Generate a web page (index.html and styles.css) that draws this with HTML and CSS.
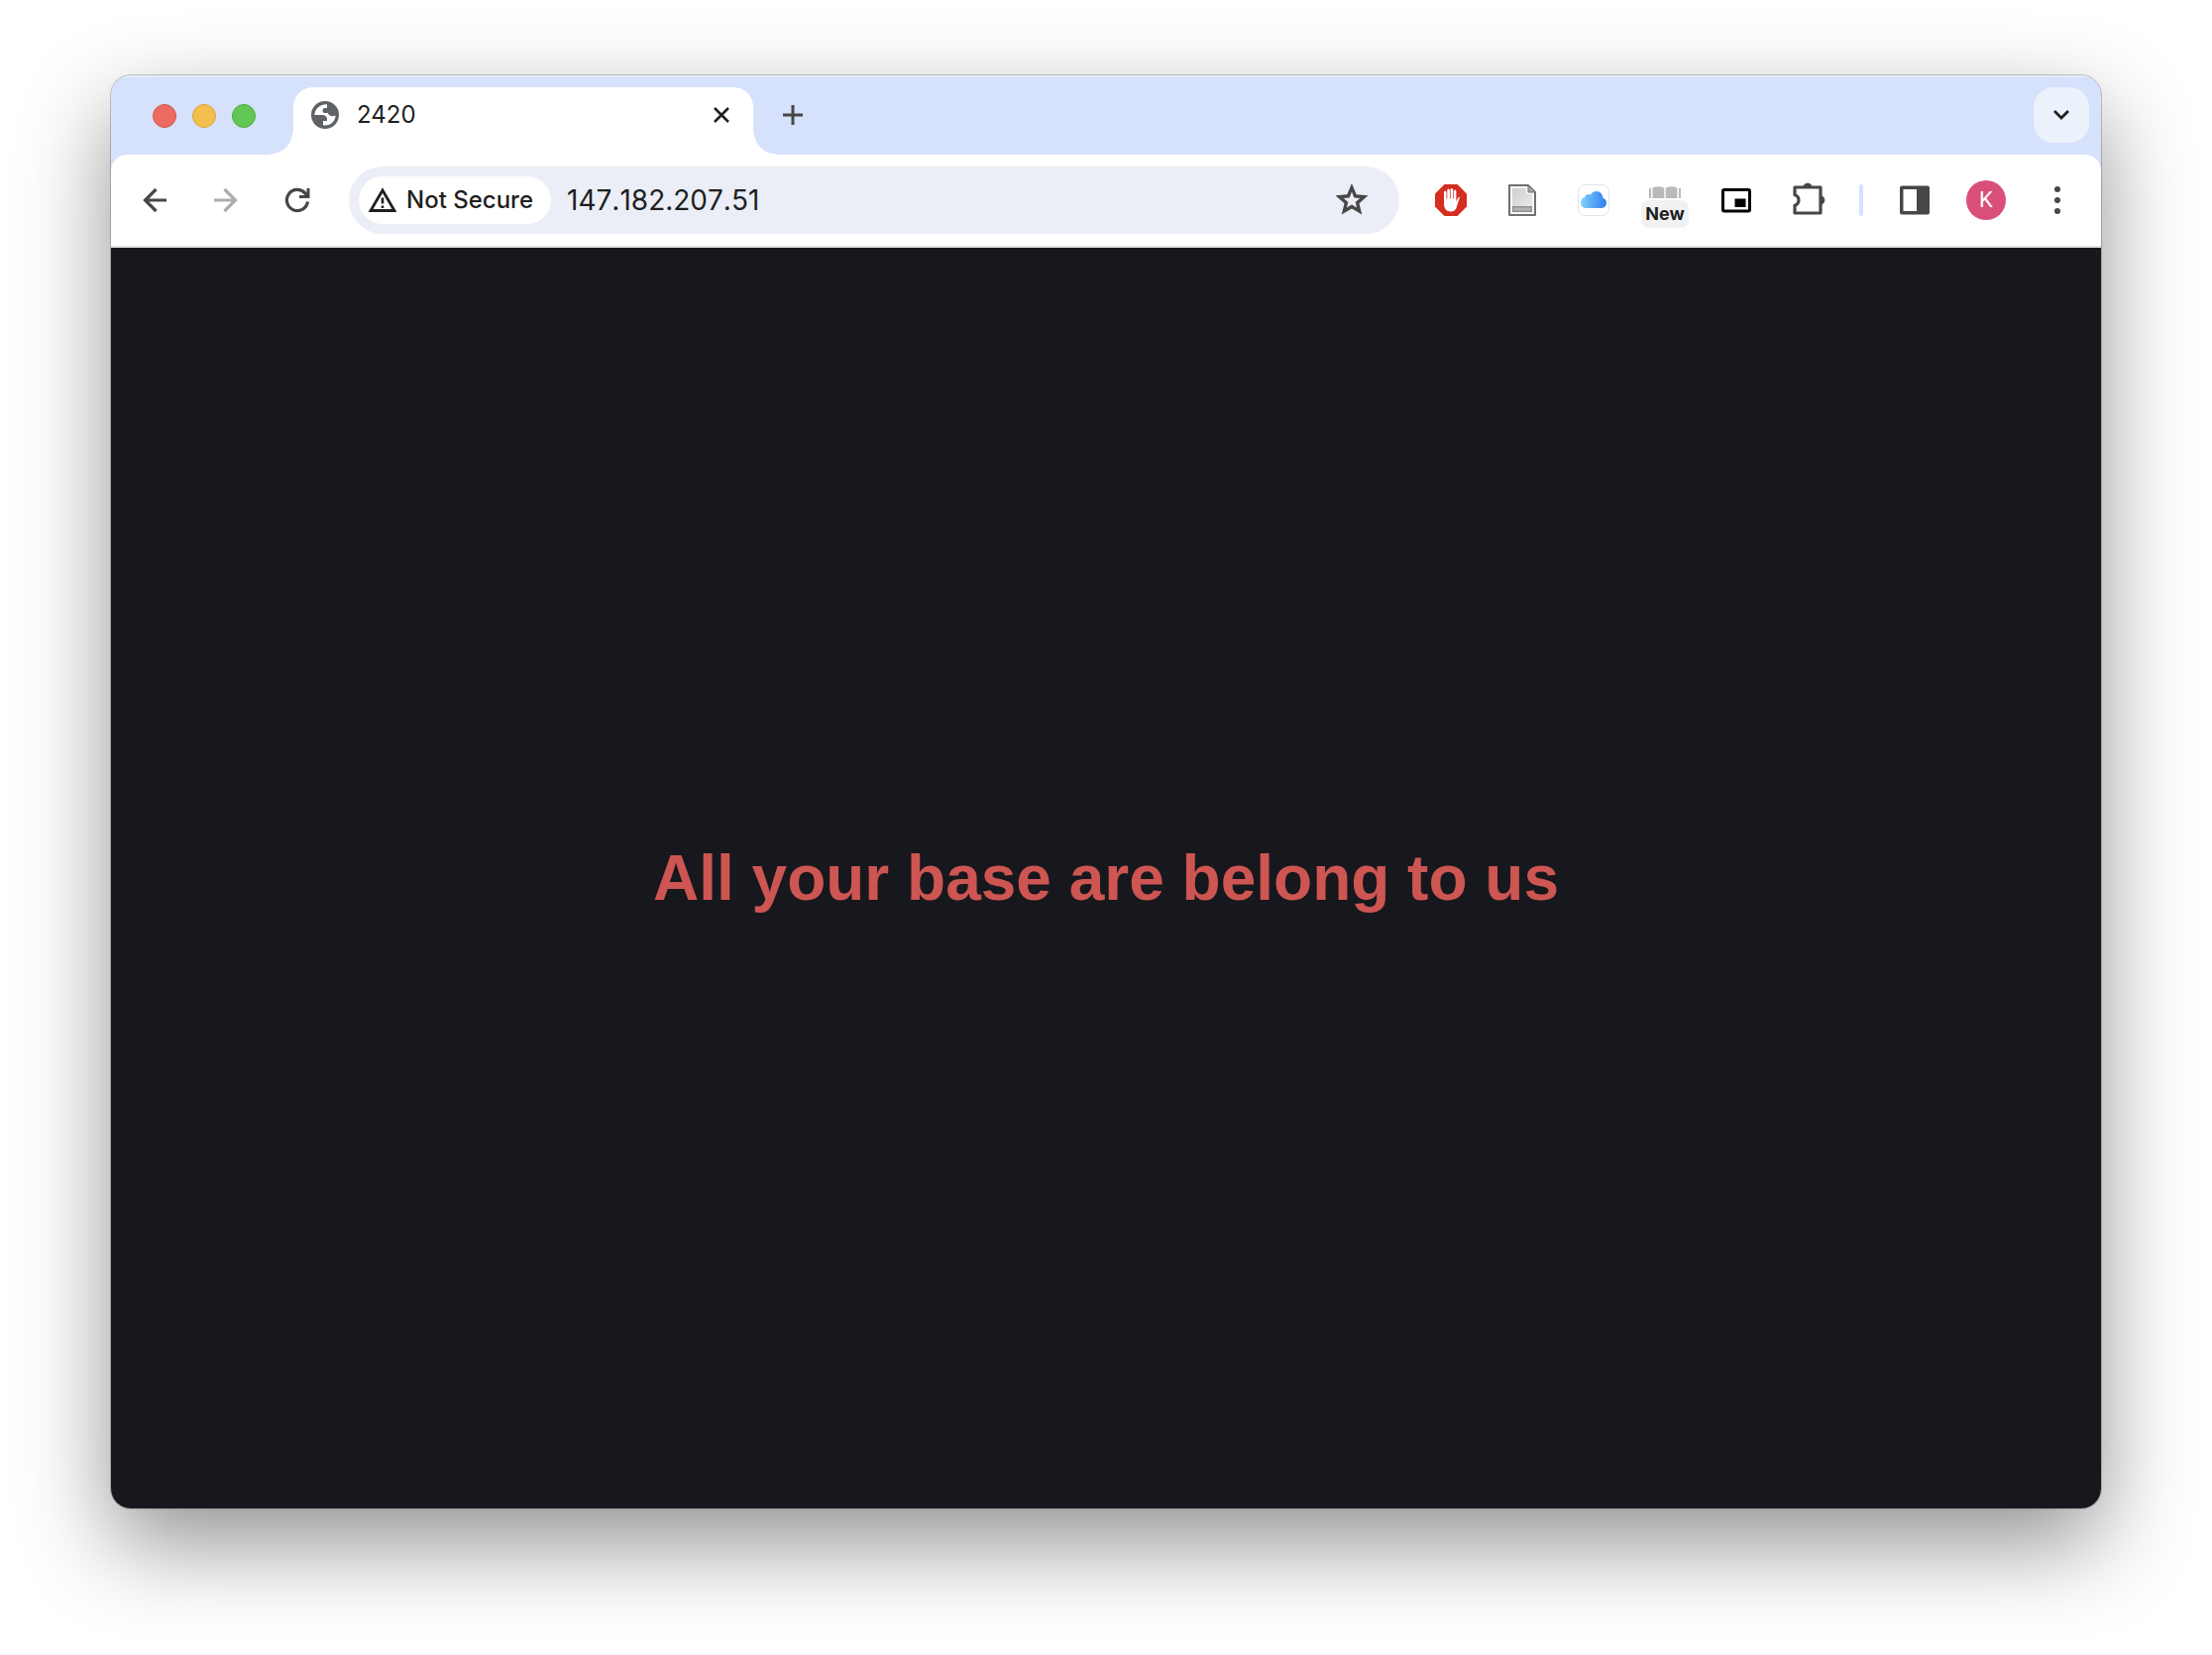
FILE: index.html
```html
<!DOCTYPE html>
<html lang="en">
<head>
<meta charset="utf-8">
<title>2420</title>
<link rel="stylesheet" href="styles.css">
</head>
<body>
<div class="window">
  <header class="tabstrip">
    <div class="lights">
      <button class="light light-close" aria-label="Close window"></button>
      <button class="light light-min" aria-label="Minimize window"></button>
      <button class="light light-max" aria-label="Zoom window"></button>
    </div>
    <div class="tab">
      <svg class="icon-28" viewBox="0 0 28 28" aria-hidden="true">
        <circle cx="14" cy="14" r="14" fill="#5f6368"/>
        <path fill="#fff" d="M16 3.400C10 3 5 6.500 3.500 12.500L3.400 14H11C14 14 16 16 16 18V20H12V24.300C19 25.500 24.500 20.500 24.600 14.500C23.500 15 22.500 15.300 21 15.200C18.500 15 17 13.500 17 12H13.500C12 12 11.500 10.500 11.500 9.500C11.500 7.500 13 7 14.500 7H16Z"/>
      </svg>
      <span class="tab-title">2420</span>
      <button class="tab-close" aria-label="Close tab">
        <svg class="icon-28" viewBox="0 0 28 28"><path d="M7 7L21 21M21 7L7 21" fill="none" stroke="#1f1f1f" stroke-width="2.600"/></svg>
      </button>
    </div>
    <button class="new-tab" aria-label="New tab">
      <svg class="icon-28" viewBox="0 0 28 28"><path d="M14 4V24M4 14H24" fill="none" stroke="#474747" stroke-width="3"/></svg>
    </button>
    <button class="tab-search" aria-label="Search tabs">
      <svg class="icon-28" viewBox="0 0 28 28"><path d="M7 10L14 17L21 10" fill="none" stroke="#1f1f1f" stroke-width="2.800"/></svg>
    </button>
  </header>
  <div class="toolbar-wrap">
  <nav class="toolbar" aria-label="Browser toolbar">
    <button class="tool" aria-label="Back">
      <svg class="icon-32" viewBox="0 0 32 32"><path d="M28 16H6M17.500 5L6.500 16L17.500 27" fill="none" stroke="#474747" stroke-width="3.200"/></svg>
    </button>
    <button class="tool" aria-label="Forward" disabled>
      <svg class="icon-32" viewBox="0 0 32 32"><path d="M4 16H26M14.500 5L25.500 16L14.500 27" fill="none" stroke="#adadad" stroke-width="3.200"/></svg>
    </button>
    <button class="tool" aria-label="Reload">
      <svg class="icon-32" viewBox="0 0 32 32"><path d="M26.500 17.500A10.600 10.600 0 1 1 23.500 8.500L26 11" fill="none" stroke="#474747" stroke-width="3.200"/><path d="M28.500 4V14H18V11H25.500V4Z" fill="#474747"/></svg>
    </button>
    <form class="omnibox">
      <button class="chip" type="button">
        <svg class="icon-32" viewBox="0 0 32 32" aria-hidden="true"><path d="M16 6L28 26.500H4Z" fill="none" stroke="#1f1f1f" stroke-width="2.800"/><path d="M16 13.500V19.500M16 21.500V24" stroke="#1f1f1f" stroke-width="2.600"/></svg>
        <span>Not Secure</span>
      </button>
      <input class="url" type="text" value="147.182.207.51" aria-label="Address">
      <button class="star" type="button" aria-label="Bookmark this tab">
        <svg class="icon-36" viewBox="0 0 36 36"><path fill="#474747" fill-rule="evenodd" d="M18 1L22.700 12.200L34.500 13.300L25.500 21.200L28.300 32.500L18 26.500L7.700 32.500L10.500 21.200L1.500 13.300L13.300 12.200ZM18 9.500L15.700 15.400L9.800 15.900L14.300 19.900L12.900 25.600L18 22.600L23.100 25.600L21.700 19.900L26.200 15.900L20.300 15.400Z"/></svg>
      </button>
    </form>
    <button class="tool" aria-label="Ad blocker">
      <svg class="icon-32" viewBox="0 0 32 32"><path d="M9.500 0H22.500L32 9.500V22.500L22.500 32H9.500L0 22.500V9.500Z" fill="#d52d20"/><path fill="#fff" d="M9 8Q9 6.500 10.200 6.500T11.500 8V14.500H12.300V6Q12.300 4.500 13.600 4.500T14.900 6V14.500H15.600V5.500Q15.600 4 16.900 4T18.200 5.500V14.500H18.900V7Q18.900 5.500 20.100 5.500T21.400 7V17.500L23 14Q24 12.300 25 13L22.500 20.500C21.500 25 20 27.500 16 27.500C11.500 27.500 9 24.500 9 19.500Z"/></svg>
    </button>
    <button class="tool" aria-label="Document extension">
      <svg class="icon-32" viewBox="0 0 32 32"><defs><linearGradient id="page" x1="0" y1="0" x2="1" y2="1"><stop offset="0" stop-color="#cfcfcf"/><stop offset="1" stop-color="#ededed"/></linearGradient></defs><path d="M3 1H22L29 8V31H3Z" fill="#f6f6f6" stroke="#707070" stroke-width="2" stroke-linejoin="round"/><path d="M6 4H20V10H26V28H6Z" fill="url(#page)"/><path d="M22 1V8H29Z" fill="#a6a6a6" stroke="#707070"/><path d="M6.700 22.700H25.300V27.300H6.700Z" fill="#b5b5b5" stroke="#929292" stroke-width="1.400"/></svg>
    </button>
    <button class="tool" aria-label="iCloud">
      <svg class="icon-32" viewBox="0 0 32 32"><defs><linearGradient id="cloud" x1="0" y1="0" x2="1" y2="0"><stop offset="0" stop-color="#82d2fa"/><stop offset="1" stop-color="#2f7df0"/></linearGradient></defs><rect x=".5" y=".5" width="31" height="31" rx="7" fill="#fff" stroke="#e2e2e2"/><path d="M8.500 24C5 24 3 21.500 3 18.500C3 15.500 5 13.500 7 13.300C7.500 10.500 10.500 9.300 12.800 10.700C14.300 8 16.500 7 18.800 7C22.800 7 25.300 10 25.300 13.800C27.500 14.500 29 16.300 29 18.800C29 21.800 27 24 24 24Z" fill="url(#cloud)"/></svg>
    </button>
    <button class="tool reader" aria-label="Reader, new">
      <svg class="book" viewBox="0 0 32 12" aria-hidden="true"><path d="M0 2H2V12H0ZM30 2H32V12H30ZM3.500 1.500Q9 -1 15.300 1.500V12H3.500ZM16.700 1.500Q23 -1 28.500 1.500V12H16.700Z" fill="#b9b9b9"/></svg>
      <span class="badge">New</span>
    </button>
    <button class="tool" aria-label="Picture in picture">
      <svg class="icon-32" viewBox="0 0 32 32"><rect x="2.500" y="5.500" width="27" height="21.500" rx="1.500" fill="none" stroke="#000" stroke-width="3"/><path d="M14.500 14.500H25.500V23H14.500Z"/></svg>
    </button>
    <button class="tool" aria-label="Extensions">
      <svg class="icon-40" viewBox="0 0 40 40"><path d="M7 7H33V33H7V25.200A5.400 5.400 0 0 0 7 14.800Z" fill="none" stroke="#474747" stroke-width="3.200" stroke-linejoin="round"/><path d="M16 6A4.200 4.200 0 0 1 24 6ZM34 16A4.200 4.200 0 0 1 34 24Z" fill="#474747" stroke="#474747"/></svg>
    </button>
    <span class="divider"></span>
    <button class="tool" aria-label="Side panel">
      <svg class="icon-32" viewBox="0 0 32 32"><path fill="#474747" fill-rule="evenodd" d="M3 1.500H29Q31 1.500 31 3.500V28.500Q31 30.500 29 30.500H3Q1 30.500 1 28.500V3.500Q1 1.500 3 1.500ZM4.500 5V27H18V5Z"/></svg>
    </button>
    <button class="tool" aria-label="Profile"><span class="avatar">K</span></button>
    <button class="tool" aria-label="Menu">
      <svg class="icon-32" viewBox="0 0 32 32" fill="#474747"><circle cx="16" cy="5" r="3"/><circle cx="16" cy="16" r="3"/><circle cx="16" cy="27" r="3"/></svg>
    </button>
  </nav>
  </div>
  <main class="page"><h1>All your base are belong to us</h1></main>
</div>
</body>
</html>
```
FILE: styles.css
```css
* { box-sizing: border-box; }

body {
  margin: 0;
  min-height: 100vh;
  padding: 76px 112px 148px;
  display: flex;
  background: #fff;
  font-family: Inter, "Liberation Sans", sans-serif;
  color: #1f1f1f;
}

button {
  border: 0;
  padding: 0;
  background: none;
  font: inherit;
  color: inherit;
  display: flex;
  align-items: center;
  justify-content: center;
}

svg { display: block; flex: none; }
.icon-28 { width: 28px; height: 28px; }
.icon-32 { width: 32px; height: 32px; }
.icon-36 { width: 36px; height: 36px; }
.icon-40 { width: 40px; height: 40px; }

.window {
  flex: 1;
  display: flex;
  flex-direction: column;
  border-radius: 20px;
  overflow: hidden;
  background: #d6e1fc;
  box-shadow: 0 0 0 1px rgba(0, 0, 0, 0.2), 0 36px 92px rgba(0, 0, 0, 0.43);
}

.tabstrip {
  height: 80px;
  padding: 12px 12px 0 42px;
  display: flex;
  align-items: flex-start;
  box-shadow: inset 0 2px #e3ebfd;
}

.lights { display: flex; gap: 16px; padding-top: 17px; }
.light { width: 24px; height: 24px; border-radius: 50%; border: 1px solid; }
.light-close { background: #ed6b60; border-color: #d5544a; }
.light-min { background: #f5bf4f; border-color: #d9a33c; }
.light-max { background: #62c655; border-color: #4eaa40; }

.tab {
  position: relative;
  width: 464px;
  height: 68px;
  margin-left: 38px;
  padding: 0 18px 12px;
  display: flex;
  align-items: center;
  background: #fff;
  border-radius: 20px 20px 0 0;
}
.tab::before,
.tab::after {
  content: "";
  position: absolute;
  bottom: 0;
  width: 24px;
  height: 24px;
}
.tab::before { right: 100%; background: radial-gradient(circle at 0 0, transparent 23px, #fff 24px); }
.tab::after { left: 100%; background: radial-gradient(circle at 100% 0, transparent 23px, #fff 24px); }
.tab-title { flex: 1; margin-left: 18px; font-size: 24px; line-height: 28px; }

.new-tab { width: 56px; height: 56px; margin-left: 12px; }
.tab-search {
  width: 56px;
  height: 56px;
  margin-left: auto;
  border-radius: 20px;
  background: #ebf2fc;
}

.toolbar-wrap { background: #d6e1fc; }
.toolbar {
  height: 94px;
  padding: 0 8px;
  display: flex;
  align-items: center;
  background: #fff;
  border-bottom: 2px solid #e1e3e1;
  border-radius: 16px 16px 0 0;
}
.tool { width: 72px; height: 72px; flex: none; }

.omnibox {
  flex: 1;
  min-width: 0;
  height: 68px;
  margin: 0 16px;
  padding: 0 30px 0 10px;
  display: flex;
  align-items: center;
  background: #ebeef6;
  border-radius: 34px;
}
.chip {
  height: 48px;
  padding: 0 18px 0 8px;
  gap: 8px;
  border-radius: 24px;
  background: #fff;
  font-size: 24px;
  font-weight: 500;
  line-height: 28px;
  white-space: nowrap;
}
.url {
  flex: 1;
  min-width: 0;
  margin-left: 16px;
  padding: 0;
  border: 0;
  outline: 0;
  background: none;
  font: 28px/36px Inter, "Liberation Sans", sans-serif;
  font-kerning: none;
  color: #1f1f1f;
}

.reader { flex-direction: column; gap: 2px; padding-top: 14px; }
.book { width: 32px; height: 12px; }
.badge {
  width: 48px;
  height: 28px;
  border-radius: 8px;
  background: #f1f1f1;
  font-size: 18px;
  font-weight: 700;
  line-height: 28px;
  text-align: center;
}

.divider { width: 4px; height: 32px; margin: 0 16px; border-radius: 2px; background: #d6e1fc; }
.avatar {
  width: 40px;
  height: 40px;
  border-radius: 50%;
  background: #d94f7a;
  color: #fff;
  font-family: Roboto, sans-serif;
  font-size: 22px;
  line-height: 40px;
}

.page {
  flex: 1;
  display: flex;
  align-items: center;
  justify-content: center;
  background: #17181d;
}
h1 {
  margin: 0;
  font: 700 64px/76px "Liberation Sans", Arial, sans-serif;
  color: #cd5552;
}
```
